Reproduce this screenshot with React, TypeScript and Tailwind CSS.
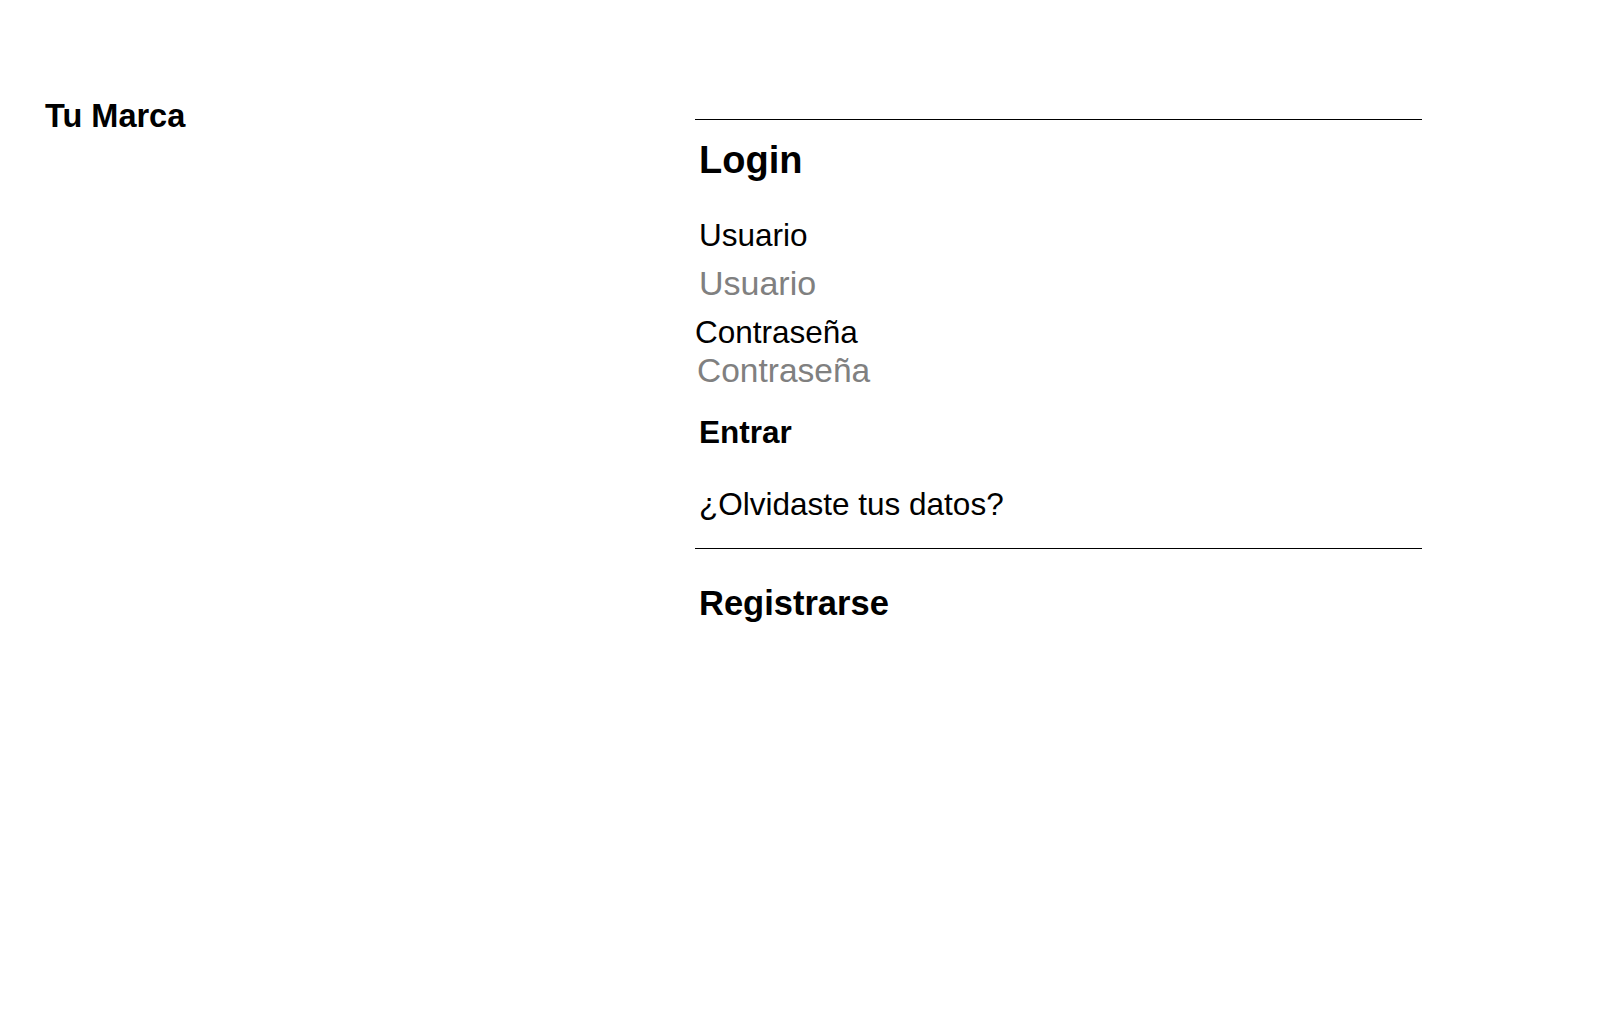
export default function App() {
    return <div className="min-h-[1010px] w-[1600px] bg-white text-black font-['Liberation_Sans',Arial,sans-serif] flex">
        <header className="w-[695px] pl-[45px] pt-[100px]">
            <h1 className="text-[32.5px] leading-[32px] font-bold">Tu Marca</h1>
        </header>

        <main className="w-[727px] pt-[119px] flex flex-col">
            <div className="h-px bg-black" />

            <h2 className="mt-[21px] pl-[4px] text-[38px] leading-[38px] font-bold">Login</h2>

            <form className="flex flex-col" onSubmit={(e) => e.preventDefault()}>
                <label className="mt-[41px] pl-[4px] text-[31.5px] leading-[31px]" htmlFor="usuario">Usuario</label>
                <input
                    id="usuario"
                    type="text"
                    placeholder="Usuario"
                    className="mt-[16px] pl-[4px] h-[33px] text-[34px] leading-[33px] bg-transparent border-0 outline-none placeholder:text-[#808080]"
                />

                <label className="mt-[17px] text-[31.5px] leading-[31px]" htmlFor="clave">Contraseña</label>
                <input
                    id="clave"
                    type="text"
                    placeholder="Contraseña"
                    className="mt-[6px] pl-[2px] h-[34px] text-[33.5px] leading-[34px] bg-transparent border-0 outline-none placeholder:text-[#808080]"
                />

                <button type="submit" className="mt-[29px] pl-[4px] self-start text-[31.5px] leading-[30px] font-bold">Entrar</button>
            </form>

            <a href="#" className="mt-[42px] pl-[4px] text-[31.5px] leading-[31px]">¿Olvidaste tus datos?</a>

            <div className="mt-[28px] h-px bg-black" />

            <a href="#" className="mt-[37px] pl-[4px] text-[34.5px] leading-[34px] font-bold">Registrarse</a>
        </main>
    </div>
}
